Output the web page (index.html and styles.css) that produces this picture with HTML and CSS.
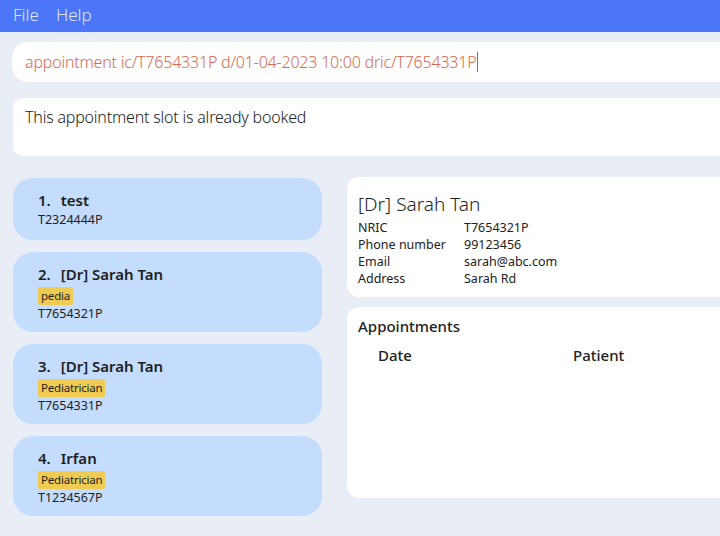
FILE: index.html
```html
<!DOCTYPE html>
<html>
<head>
<meta charset="utf-8">
<link rel="stylesheet" href="styles.css">
</head>
<body>
<div class="menubar">
  <span class="menu-item">File</span>
  <span class="menu-item">Help</span>
</div>
<div class="main">
  <div class="command-box">
    <span class="command-text">appointment ic/T7654331P d/01-04-2023 10:00 dric/T7654331P</span><span class="caret"></span>
  </div>
  <div class="result-box">This appointment slot is already booked</div>
  <div class="content">
    <div class="list">
      <div class="card">
        <div class="card-name"><span class="idx">1.</span>test</div>
        <div class="card-id">T2324444P</div>
      </div>
      <div class="card">
        <div class="card-name"><span class="idx">2.</span>[Dr] Sarah Tan</div>
        <div class="tags"><span class="tag">pedia</span></div>
        <div class="card-id">T7654321P</div>
      </div>
      <div class="card">
        <div class="card-name"><span class="idx">3.</span>[Dr] Sarah Tan</div>
        <div class="tags"><span class="tag">Pediatrician</span></div>
        <div class="card-id">T7654331P</div>
      </div>
      <div class="card">
        <div class="card-name"><span class="idx">4.</span>Irfan</div>
        <div class="tags"><span class="tag">Pediatrician</span></div>
        <div class="card-id">T1234567P</div>
      </div>
    </div>
    <div class="side">
      <div class="detail">
        <div class="detail-name">[Dr] Sarah Tan</div>
        <div class="detail-grid">
          <span>NRIC</span><span>T7654321P</span>
          <span>Phone number</span><span>99123456</span>
          <span>Email</span><span>sarah@abc.com</span>
          <span>Address</span><span>Sarah Rd</span>
        </div>
      </div>
      <div class="appts">
        <div class="appts-title">Appointments</div>
        <div class="appts-head">
          <span class="col-date">Date</span>
          <span class="col-patient">Patient</span>
        </div>
      </div>
    </div>
  </div>
</div>
</body>
</html>
```

FILE: styles.css
```css
* { box-sizing: border-box; }
html, body { margin: 0; padding: 0; }
body {
  width: 720px;
  height: 536px;
  overflow: hidden;
  background: #e8edf6;
  font-family: "Noto Sans", "Open Sans", sans-serif;
  color: #222;
}
.menubar {
  height: 32px;
  background: #4b76f7;
  display: flex;
  align-items: center;
  padding-left: 13px;
  padding-bottom: 3px;
  gap: 17px;
}
.menu-item {
  color: #dfe6fb;
  font-size: 17px;
  font-weight: 300;
}
.main {
  padding: 10px 0 0 12px;
}
.command-box {
  height: 40px;
  margin-right: -20px;
  background: #fff;
  border-radius: 16px;
  display: flex;
  align-items: center;
  padding-left: 13px;
}
.command-text {
  color: #d9684f;
  font-size: 16px;
  font-weight: 300;
  letter-spacing: -0.2px;
}
.caret {
  display: inline-block;
  width: 1px;
  height: 20px;
  background: #c9543d;
  margin-left: 1px;
}
.result-box {
  margin-top: 16px;
  margin-left: 1px;
  margin-right: -20px;
  height: 58px;
  background: #fff;
  border-radius: 10px;
  padding: 8px 12px;
  font-size: 16px;
  font-weight: 300;
  color: #222;
  letter-spacing: -0.2px;
}
.content {
  display: flex;
  align-items: flex-start;
  margin-top: 21px;
}
.list {
  width: 309px;
  margin-left: 1px;
  margin-top: 1px;
  display: flex;
  flex-direction: column;
  gap: 12px;
}
.card {
  background: #c4dcfd;
  border-radius: 20px;
  padding: 12px 25px 10px 25px;
  min-height: 62px;
}
.card-name {
  font-size: 15px;
  font-weight: 600;
  color: #1e1e1e;
  line-height: 20px;
}
.idx { margin-right: 10px; }
.tags { margin-top: 3px; display: flex; }
.tag {
  background: #efcb52;
  border-radius: 2px;
  font-size: 11.5px;
  letter-spacing: -0.2px;
  line-height: 18px;
  padding: 0 3px;
  color: #1e1e1e;
}
.card-id {
  font-size: 12.5px;
  line-height: 17px;
  margin-top: 1px;
  color: #1e1e1e;
}
.tags + .card-id { margin-top: 0; }
.side {
  margin-left: 25px;
  margin-right: -20px;
  flex: 1;
  display: flex;
  flex-direction: column;
  gap: 10px;
}
.detail {
  background: #fff;
  border-radius: 12px;
  padding: 14px 11px 10px;
  height: 120px;
}
.detail-name {
  font-size: 19px;
  font-weight: 300;
  line-height: 26px;
  color: #222;
}
.detail-grid {
  display: grid;
  grid-template-columns: 106px auto;
  font-size: 12.5px;
  line-height: 17px;
  color: #222;
  margin-top: 2px;
}
.appts {
  background: #fff;
  border-radius: 12px;
  height: 191px;
  padding: 9px 11px;
}
.appts-title {
  font-size: 15px;
  font-weight: 500;
  line-height: 20px;
  color: #222;
}
.appts-head {
  display: flex;
  margin-top: 9px;
  padding-left: 20px;
  font-size: 15px;
  font-weight: 500;
  color: #222;
}
.col-date { width: 195px; }
```
